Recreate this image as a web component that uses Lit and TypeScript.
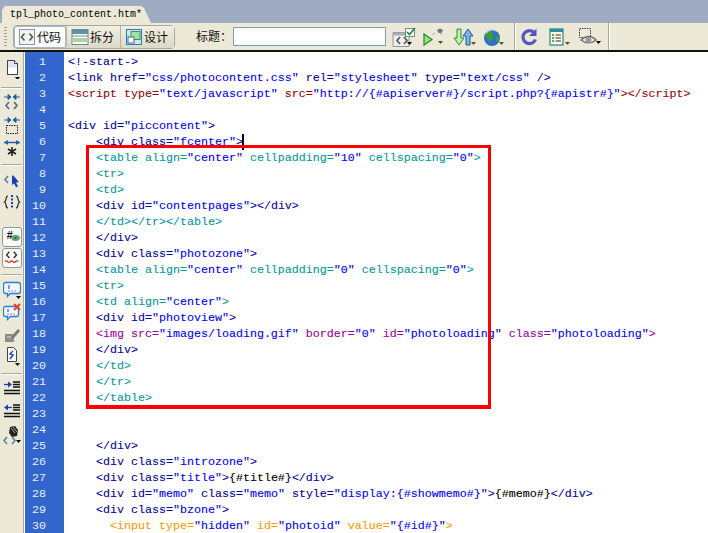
import { LitElement, html, css, svg, TemplateResult } from "lit";
import { customElement } from "lit/decorators.js";

type Kind = "div" | "table" | "script" | "input" | "img" | "comment";
const LINES: [number, Kind, string][] = [
  [0, "comment", "<!-start->"],
  [0, "div", '<link href="css/photocontent.css" rel="stylesheet" type="text/css" />'],
  [0, "script", '<script type="text/javascript" src="http://{#apiserver#}/script.php?{#apistr#}"></script>'],
  [0, "div", ""],
  [0, "div", '<div id="piccontent">'],
  [4, "div", '<div class="fcenter">'],
  [4, "table", '<table align="center" cellpadding="10" cellspacing="0">'],
  [4, "table", "<tr>"],
  [4, "table", "<td>"],
  [4, "div", '<div id="contentpages"></div>'],
  [4, "table", "</td></tr></table>"],
  [4, "div", "</div>"],
  [4, "div", '<div class="photozone">'],
  [4, "table", '<table align="center" cellpadding="0" cellspacing="0">'],
  [4, "table", "<tr>"],
  [4, "table", '<td align="center">'],
  [4, "div", '<div id="photoview">'],
  [4, "img", '<img src="images/loading.gif" border="0" id="photoloading" class="photoloading">'],
  [4, "div", "</div>"],
  [4, "table", "</td>"],
  [4, "table", "</tr>"],
  [4, "table", "</table>"],
  [0, "div", ""],
  [0, "div", ""],
  [4, "div", "</div>"],
  [4, "div", '<div class="introzone">'],
  [4, "div", '<div class="title">{#title#}</div>'],
  [4, "div", '<div id="memo" class="memo" style="display:{#showmemo#}">{#memo#}</div>'],
  [4, "div", '<div class="bzone">'],
  [6, "input", '<input type="hidden" id="photoid" value="{#id#}">'],
];

function renderCode(kind: Kind, text: string): TemplateResult[] {
  const out: TemplateResult[] = [];
  for (const part of text.split(/(<[^>]*>)/)) {
    if (!part) continue;
    if (!part.startsWith("<")) {
      out.push(html`<span class="plain">${part}</span>`);
      continue;
    }
    for (const seg of part.split(/("[^"]*")/)) {
      if (!seg) continue;
      out.push(seg.startsWith('"') ? html`<span class="val">${seg}</span>` : html`<span class=${kind}>${seg}</span>`);
    }
  }
  return out;
}

const caret = (x: number, y: number, c = "#000") => svg`<path d="M${x} ${y}h5l-2.5 3z" fill=${c}/>`;
const brackets = (x: number, y: number, c = "#5a6a7a") =>
  svg`<path d="M${x + 3} ${y}l-3 3.5 3 3.5M${x + 8} ${y}l3 3.5-3 3.5" fill="none" stroke=${c} stroke-width="1.6"/>`;
const arrows = svg`<path d="M1 4h6M8 4l-3-2.5v5zM17 4h-6M10 4l3-2.5v5z" fill="#1f5fa8" stroke="#1f5fa8"/>`;

const SIDE: Record<string, TemplateResult> = {
  doc: svg`<path d="M4.5 1.5h7l3 3v11h-10z" fill="#fff" stroke="#444"/><path d="M4.5 1.5h7l3 3v4h-10z" fill="#dce6f8"/><path d="M4.5 1.5h7l3 3v11h-10z" fill="none" stroke="#444"/><path d="M11.5 1.5v3h3" fill="#fff" stroke="#444"/>${caret(12, 18)}`,
  a: svg`${arrows}${brackets(3, 9)}`,
  b: svg`${arrows}<rect x="3.5" y="9.5" width="11" height="8" fill="none" stroke="#222" stroke-dasharray="1.5 1"/>`,
  c: svg`<path d="M1 3.5h16" stroke="#1f5fa8" stroke-width="1.4"/><path d="M5 1v5L1 3.5zM13 1v5l4-2.5z" fill="#1f5fa8"/><path d="M9 8v9M5 10l8 5M13 10l-8 5" stroke="#222" stroke-width="1.6"/>`,
  d: svg`${brackets(2, 6, "#6d7a86")}<path d="M9 5l7 7-3 .5 2 4-2 .8-2-4-2 2z" fill="#1541b8"/>`,
  e: svg`<path d="M5 3c-3 0-1 5-3.500 6 2.500 1 .5 6 3.500 6M13 3c3 0 1 5 3.500 6-2.500 1-.5 6-3.500 6" fill="none" stroke="#222" stroke-width="1.200"/><path d="M9 2v14" stroke="#2233dd" stroke-width="2" stroke-dasharray="2 1.500"/>`,
  f: svg`<text x="3" y="12" font-family="Liberation Sans" font-size="12" font-weight="700" fill="#111">#</text><ellipse cx="13" cy="11" rx="4.500" ry="3" fill="#54b06a" stroke="#888"/><circle cx="13" cy="11" r="1.200" fill="#1d6b33"/>`,
  g: svg`${brackets(3, 3, "#333")}<path d="M1 14q1.500-2 3 0t3 0 3 0 3 0 3 0" fill="none" stroke="#e01010" stroke-width="1.200"/>`,
  h: svg`<path d="M2.500 2.500h13a2 2 0 0 1 2 2v7a2 2 0 0 1-2 2h-8l-3 3v-3h-2a2 2 0 0 1-2-2v-7a2 2 0 0 1 2-2z" fill="#f3f8ff" stroke="#2f7bd4" stroke-width="1.300"/><path d="M6 5v4M6 10.500v1M9 10.500v1M12 10.500v1" stroke="#1a3fb0"/>${caret(13, 16)}`,
  i: svg`<path d="M2.500 3.500h11a2 2 0 0 1 2 2v6a2 2 0 0 1-2 2h-6l-3 3v-3h-2a2 2 0 0 1-2-2v-6a2 2 0 0 1 2-2z" fill="#f3f8ff" stroke="#2f7bd4" stroke-width="1.300"/><path d="M5 6v3M5 10.500v1M8 10.500v1M11 10.500v1" stroke="#1a3fb0"/><path d="M11 1l6 6M17 1l-6 6" stroke="#e8401c" stroke-width="2"/>`,
  j: svg`<path d="M2 8h9v8H2z" fill="#8c8c86"/><path d="M8 11l7-8 2 2-7 8-3 1z" fill="#777772" stroke="#aaa" stroke-width=".5"/><path d="M4 11h4" stroke="#ddd"/>`,
  k: svg`<path d="M4.500 1.500h6l3 3v11h-9z" fill="#fff" stroke="#444"/><path d="M10 5L7 8l3 1-3 4" fill="none" stroke="#2440c8" stroke-width="1.400"/>${caret(12, 17)}`,
  l: svg`<path d="M1 14.500h16M1 11.500h16M10 5.500h7M10 8h7M10 3h7" stroke="#111" stroke-width="1.300"/><path d="M1 5.500h5" stroke="#1d3fb5" stroke-width="1.300"/><path d="M5 2.500v6l4-3z" fill="#1d3fb5"/>`,
  m: svg`<path d="M1 14.500h16M1 11.500h16M10 5.500h7M10 8h7M10 3h7" stroke="#111" stroke-width="1.300"/><path d="M4 5.500h5" stroke="#1d3fb5" stroke-width="1.300"/><path d="M5 2.500v6l-4-3z" fill="#1d3fb5"/>`,
  n: svg`<path d="M7 2l5-1 3 4-1 6-5 1-3-4z" fill="#222"/><path d="M8 3l4 5M10 2l4 5" stroke="#ddd" stroke-width=".7"/>${brackets(1, 12, "#64808c")}${caret(13, 15)}`,
};

const TOP: Record<string, TemplateResult> = {
  code: svg`<path d="M1 5.500h16v14H1z" fill="#f1f0e8" stroke="#90969c"/><path d="M1 5.500h16v3H1z" fill="#a8adb3"/><path d="M8 10l-3 3.500 3 3.500M12 10l3 3.500-3 3.500" fill="none" stroke="#55606c" stroke-width="1.800"/><rect x="13.500" y="1.500" width="9" height="8" fill="#fff" stroke="#7c8c80"/><path d="M15 5l2.500 2.500L23 1" fill="none" stroke="#158a3d" stroke-width="1.700"/>${caret(15, 15)}`,
  play: svg`<path d="M2 7l8 5.500-8 5.500z" fill="#a3e070" stroke="#1c8a3c" stroke-width="1.200"/><path d="M15 3l3-1.500 3 1.500-1.500 3h-3z" fill="#687480"/><path d="M10.500 8l2-2.500M20 8l-2-2.500" stroke="#9aa4ad"/>${caret(16, 14, "#555518")}`,
  sync: svg`<path d="M3 2h4v9h3l-5 7-5-7h3z" transform="translate(2 0)" fill="#c5eeaa" stroke="#2b8a3e"/><path d="M16 2l5 7h-3v9h-4V9h-3z" fill="#7db4e4" stroke="#1f5a9c"/>${caret(19, 15, "#555518")}`,
  globe: svg`<circle cx="10" cy="11" r="8" fill="#2b70c9"/><path d="M4 6l5-2 3 2-2 3 1 3-3 4-2-4-3-2zM13 9l4 1v3l-3 2z" fill="#3f9b3e"/><path d="M4 6q5-5 10-2" fill="none" stroke="#a8d0f4" stroke-width="1.400"/>${caret(17, 15, "#555518")}`,
  refresh: svg`<path d="M14.500 6a6.500 6.500 0 1 0 1 6.500" fill="none" stroke="#5358c0" stroke-width="3.200"/><path d="M16.500 1.500v7.500h-7.500z" fill="#5358c0"/>`,
  list: svg`<rect x="1" y="2" width="13" height="16" fill="#fffde6" stroke="#2a7f8f" stroke-width="1.200"/><path d="M1 2h13v3H1z" fill="#2a8f9f"/><path d="M3 8h2M3 11h2M3 14h2" stroke="#1c8a3c" stroke-width="1.500"/><path d="M6.500 8H12M6.500 11H12M6.500 14H12" stroke="#333" stroke-width="1.200"/>${caret(16, 15, "#555518")}`,
  eye: svg`<rect x="1.500" y="1.500" width="11" height="9" fill="none" stroke="#333" stroke-dasharray="1.500 1"/><path d="M3 13q8-7 15 0-7 6-15 0z" fill="#f3f2ea" stroke="#666" stroke-width="1.200"/><circle cx="10.500" cy="13" r="3" fill="#999"/>${caret(18, 14)}`,
};

const sideIcon = (k: string, cls = "") => html`<span class="slot ${cls}"><svg width="18" height="20" viewBox="0 0 18 20">${SIDE[k]}</svg></span>`;
const topIcon = (k: string, cls = "") => html`<svg class="ti ${cls}" width="24" height="20" viewBox="0 0 24 20">${TOP[k]}</svg>`;

@customElement("app-root")
export class AppRoot extends LitElement {
  static styles = css`
    :host { display: block; width: 708px; height: 533px; overflow: hidden; background: #fff; font-family: "Liberation Sans", "Noto Sans CJK SC", sans-serif; }
    .tabs { height: 23px; background: #9eabc0; display: flex; align-items: flex-end; box-sizing: border-box; padding-left: 2px; }
    .tab { height: 17px; width: 149px; background: #ece9d8; box-sizing: border-box; padding: 1px 0 0 8px; font: 10px/15px "Liberation Mono", monospace; color: #000; clip-path: polygon(0 100%, 0 4px, 3px 0, 139px 0, 142px 2px, 149px 100%); }
    .toolbar { background: #ece9d8; border-bottom: 2px solid #111; box-sizing: border-box; height: 29px; display: flex; align-items: center; padding-left: 4px; }
    .grip { width: 3px; height: 20px; margin-right: 6px; background: repeating-linear-gradient(#a8a48f 0 1px, #ece9d8 1px 3px); }
    .seg { display: flex; height: 22px; border: 1px solid #aca899; border-radius: 4px; background: #dedbca; }
    .btn { display: flex; align-items: center; gap: 1px; width: 54px; box-sizing: border-box; padding-left: 4px; font-size: 12px; color: #111; border-right: 1px solid #b5b2a2; background: linear-gradient(#f2f0e4, #dcd9c8); }
    .btn:last-child { border-right: 0; width: 53px; }
    .btn.on { background: #fdfdfb; box-shadow: inset 0 0 0 1px #a8b8cc; border-radius: 3px; width: 53px; }
    .label { margin-left: 21px; font-size: 12px; color: #111; width: 37px; flex: none; white-space: nowrap; line-height: 16px; }
    .field { width: 153px; height: 19px; border: 1px solid #7f9db9; background: #fff; box-sizing: border-box; flex: none; }
    .icons { display: flex; align-items: center; gap: 6px; margin-left: 6px; height: 100%; }
    .ti.q { margin-left: -1px; }
    .vsep { width: 1px; height: 27px; background: #aca899; box-shadow: 1px 0 #fff; }
    .vsep.a { margin-left: 2px; }
    .main { display: flex; height: 481px; }
    .side { width: 23px; flex: none; background: #ece9d8; border-right: 1px solid #aca899; display: flex; flex-direction: column; align-items: center; padding-top: 7px; box-sizing: content-box; }
    .slot { height: 20px; width: 23px; display: flex; justify-content: center; margin-bottom: 3px; flex: none; }
    .slot.tight { margin-bottom: 0; }
    .slot.boxed { box-sizing: border-box; width: 20px; height: 20px; margin: 0 0 1px; border: 1px solid #8f98a0; border-radius: 3px; background: #fafaf6; align-items: center; }
    .slot.boxed svg { width: 16px; height: 18px; }
    .hr { width: 21px; height: 1px; background: #aca899; flex: none; margin: 5px 0; box-shadow: 0 1px #fff; }
    .hr.first { margin: 5px 0; }
    .hr.mid { margin: 2px 0 5px; }
    .hr.last { margin: 4px 0 5px; }
    .gapb { margin-top: 11px; }
    .gutter { width: 40px; flex: none; background: #3366cc; border-left: 1px solid #fff; box-sizing: border-box; color: #e8eefc; font: 11.67px/16px "Liberation Mono", monospace; text-align: right; padding: 2px 18px 0 0; overflow: hidden; }
    .gutter div { height: 16px; }
    .code { flex: 1; position: relative; overflow: hidden; font: 11.67px/16px "Liberation Mono", monospace; padding: 2px 0 0 4px; -webkit-text-stroke: .1px; }
    .row { height: 16px; white-space: pre; }
    .plain { color: #000; }
    .val { color: #0000ff; }
    .div { color: #0000a0; }
    .comment { color: #0000a0; }
    .table { color: #009999; }
    .script { color: #990000; }
    .input { color: #ff9900; }
    .img { color: #990099; }
    .cursor { position: absolute; left: 178px; top: 82px; width: 2px; height: 16px; background: #000; }
    .box { position: absolute; left: 22px; top: 93px; width: 405px; height: 264px; box-sizing: border-box; border: 3px solid #f00; border-bottom-width: 4px; }
  `;

  render() {
    return html`
      <div class="tabs"><div class="tab">tpl_photo_content.htm*</div></div>
      <div class="toolbar">
        <span class="grip"></span>
        <div class="seg">
          <div class="btn on"><svg width="18" height="18" viewBox="0 0 18 18"><rect x="1.500" y="1.500" width="15" height="15" fill="#f4f4ee" stroke="#8a94a0"/>${brackets(3.500, 5.500, "#4a5560")}</svg>代码</div>
          <div class="btn"><svg width="18" height="18" viewBox="0 0 18 18"><rect x="1" y="1.500" width="16" height="15" fill="#fff" stroke="#6f8a90"/><path d="M1 2h16v4H1z" fill="#5f93a5"/><path d="M2 10h14v4H2z" fill="#a8d8a0"/><path d="M1 8h16" stroke="#888"/></svg>拆分</div>
          <div class="btn"><svg width="18" height="18" viewBox="0 0 18 18"><rect x="1.500" y="1.500" width="15" height="15" fill="#cfe6fa" stroke="#2a7cc0"/><rect x="6" y="3.500" width="9" height="8" fill="#a8e0a0" stroke="#3f8f5f"/><rect x="3" y="9" width="6" height="6" fill="#fdfdf0" stroke="#3f6f8f"/></svg>设计</div>
        </div>
        <span class="label">标题：</span>
        <div class="field"></div>
        <div class="icons">
          ${topIcon("code")}${topIcon("play")}${topIcon("sync")}${topIcon("globe")}
          <span class="vsep a"></span>
          ${topIcon("refresh", "q")}${topIcon("list", "q")}${topIcon("eye", "q")}
          <span class="vsep"></span>
        </div>
      </div>
      <div class="main">
        <div class="side">
          ${sideIcon("doc")}
          <span class="hr first"></span>
          ${sideIcon("a")}${sideIcon("b")}${sideIcon("c")}
          <span class="hr mid"></span>
          ${sideIcon("d")}${sideIcon("e")}
          <span class="gapb"></span>
          ${sideIcon("f", "boxed")}${sideIcon("g", "boxed")}
          <span class="hr"></span>
          ${sideIcon("h")}${sideIcon("i")}${sideIcon("j", "tight")}${sideIcon("k")}
          <span class="hr last"></span>
          ${sideIcon("l")}${sideIcon("m")}${sideIcon("n")}
        </div>
        <div class="gutter">${LINES.map((_, i) => html`<div>${i + 1}</div>`)}</div>
        <div class="code">
          ${LINES.map(([ind, kind, text]) => html`<div class="row">${" ".repeat(ind)}${renderCode(kind, text)}</div>`)}
          <span class="cursor"></span>
          <span class="box"></span>
        </div>
      </div>
    `;
  }
}
